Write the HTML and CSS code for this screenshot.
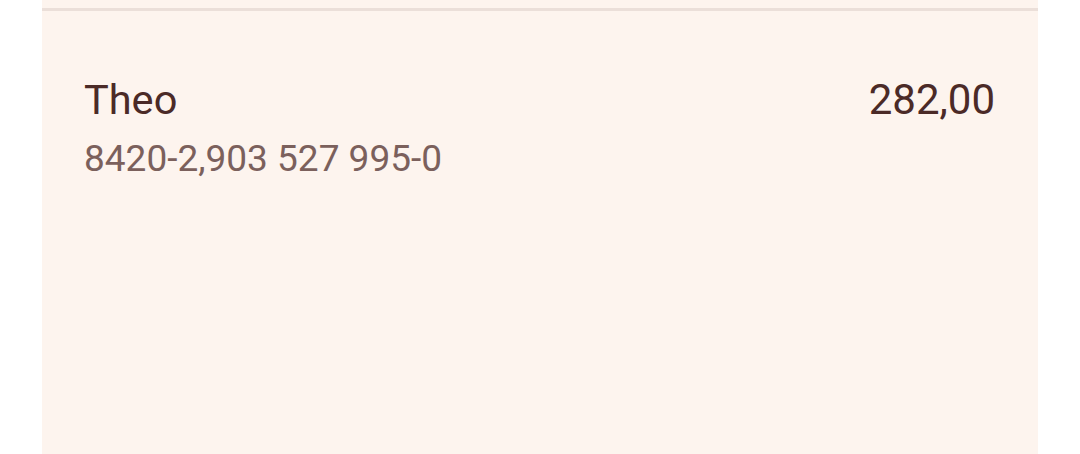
FILE: index.html
```html
<!DOCTYPE html>
<html lang="en">
<head>
  <meta charset="UTF-8" />
  <meta name="viewport" content="width=device-width, initial-scale=1.0"/>
  <title>Theo</title>
  <link rel="stylesheet" href="styles.css">
</head>
<body>
  <div class="card">
    <div class="divider"></div>
    <div class="row">
      <div class="info">
        <div class="name">Theo</div>
        <div class="account">8420-2,903 527 995-0</div>
      </div>
      <div class="amount">282,00</div>
    </div>
  </div>
</body>
</html>
```

FILE: styles.css
```css
html, body {
  margin: 0;
  padding: 0;
  background: #fff;
  font-family: Roboto, "Noto Sans", sans-serif;
}
.card {
  margin: 0 42px;
  height: 454px;
  background: #fdf4ee;
  padding-top: 8px;
  box-sizing: border-box;
}
.divider {
  height: 3px;
  background: #ebdfd9;
}
.row {
  display: flex;
  justify-content: space-between;
  padding: 65px 43px 0 42px;
}
.name {
  font-size: 41.5px;
  line-height: 48px;
  color: #4b2a27;
}
.account {
  font-size: 37px;
  line-height: 48px;
  margin-top: 11px;
  color: #7b605c;
}
.amount {
  font-size: 42px;
  line-height: 48px;
  color: #4b2a27;
}
```
